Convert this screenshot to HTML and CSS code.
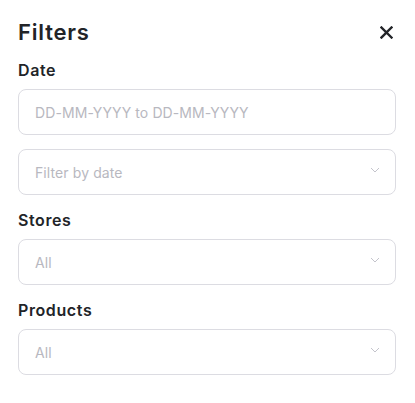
FILE: index.html
```html
<!DOCTYPE html>
<html>
<head>
<meta charset="utf-8">
<link rel="stylesheet" href="styles.css">
</head>
<body>
<div class="panel">
  <div class="header">
    <h1 class="title">Filters</h1>
    <button class="close" aria-label="Close">
      <svg width="13" height="13" viewBox="0 0 13 13"><path d="M1.5 1.5L11.5 11.5M11.5 1.5L1.5 11.5" stroke="#222428" stroke-width="2.4" stroke-linecap="square"/></svg>
    </button>
  </div>
  <div class="group">
    <div class="label">Date</div>
    <div class="field"><span class="ph">DD-MM-YYYY to DD-MM-YYYY</span></div>
    <div class="field select"><span class="ph">Filter by date</span><svg class="chev" width="10" height="6" viewBox="0 0 10 6"><path d="M1 1L5 5L9 1" fill="none" stroke="#c4c4cc" stroke-width="1"/></svg></div>
  </div>
  <div class="group">
    <div class="label">Stores</div>
    <div class="field select"><span class="ph">All</span><svg class="chev" width="10" height="6" viewBox="0 0 10 6"><path d="M1 1L5 5L9 1" fill="none" stroke="#c4c4cc" stroke-width="1"/></svg></div>
  </div>
  <div class="group">
    <div class="label">Products</div>
    <div class="field select"><span class="ph">All</span><svg class="chev" width="10" height="6" viewBox="0 0 10 6"><path d="M1 1L5 5L9 1" fill="none" stroke="#c4c4cc" stroke-width="1"/></svg></div>
  </div>
</div>
</body>
</html>
```
FILE: styles.css
```css
html, body {
  margin: 0;
  padding: 0;
  background: #ffffff;
}
body {
  font-family: "Inter", "Noto Sans", sans-serif;
  color: #222428;
}
.panel {
  padding: 18px 19px 0 18px;
  display: flex;
  flex-direction: column;
}
.header {
  display: flex;
  align-items: center;
  justify-content: space-between;
  height: 28px;
}
.title {
  margin: 0;
  font-size: 22px;
  font-weight: 600;
  letter-spacing: 0.8px;
}
.close {
  border: 0;
  background: none;
  padding: 0;
  margin-right: 3px;
  display: flex;
}
.group {
  display: flex;
  flex-direction: column;
}
.label {
  font-size: 16px;
  font-weight: 600;
  margin-top: 15px;
  height: 20px;
  line-height: 20px;
  margin-bottom: 9px;
  letter-spacing: 0.6px;
}
.header + .group .label {
  margin-top: 14px;
}
.field {
  border: 1px solid #dcdce2;
  border-radius: 8px;
  display: flex;
  align-items: center;
  justify-content: space-between;
  padding: 0 15px 0 16px;
  box-sizing: border-box;
  height: 46px;
}
.field + .field {
  margin-top: 14px;
}
.ph {
  font-size: 14px;
  color: #b8b8c0;
  letter-spacing: 0.1px;
}
.chev {
  margin-bottom: 4px;
}
```
